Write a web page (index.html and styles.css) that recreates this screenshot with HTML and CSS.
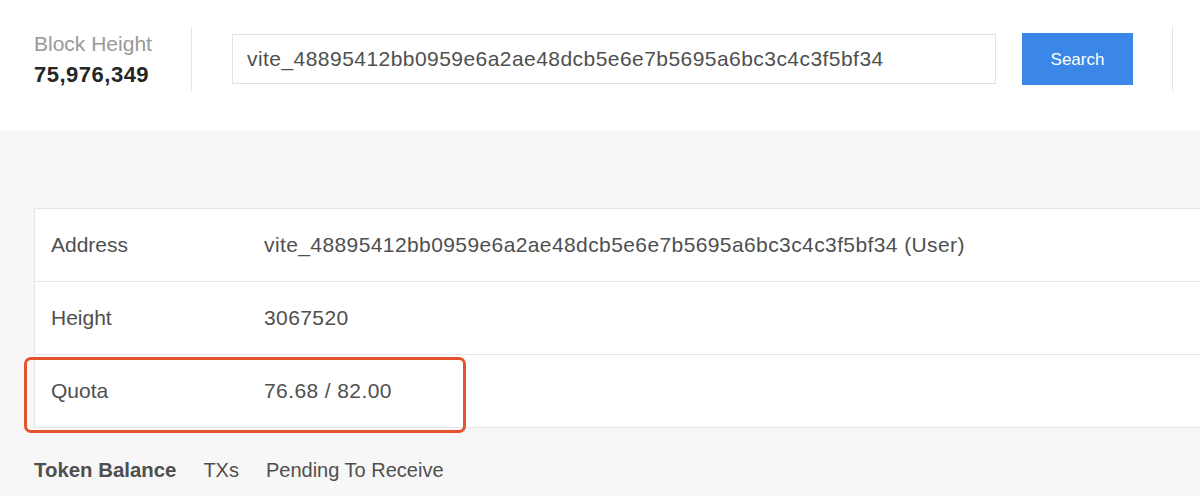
FILE: index.html
```html
<!DOCTYPE html>
<html>
<head>
<meta charset="utf-8">
<link rel="stylesheet" href="styles.css">
</head>
<body>
<header class="top">
  <div class="block-info">
    <div class="bh-label">Block Height</div>
    <div class="bh-value">75,976,349</div>
  </div>
  <div class="vdiv"></div>
  <input class="search-input" type="text" value="vite_48895412bb0959e6a2ae48dcb5e6e7b5695a6bc3c4c3f5bf34">
  <button class="search-btn">Search</button>
  <div class="vdiv vdiv2"></div>
</header>
<main class="content">
  <div class="table">
    <div class="row"><div class="label">Address</div><div class="value">vite_48895412bb0959e6a2ae48dcb5e6e7b5695a6bc3c4c3f5bf34 (User)</div></div>
    <div class="row"><div class="label">Height</div><div class="value">3067520</div></div>
    <div class="row"><div class="label">Quota</div><div class="value">76.68 / 82.00</div></div>
  </div>
  <div class="highlight"></div>
  <nav class="tabs">
    <span class="tab active">Token Balance</span>
    <span class="tab">TXs</span>
    <span class="tab">Pending To Receive</span>
  </nav>
</main>
</body>
</html>
```
FILE: styles.css
```css
html, body {
  margin: 0;
  padding: 0;
  height: 100%;
  overflow: hidden;
  background: #f7f7f7;
  font-family: "Liberation Sans", Arial, Helvetica, sans-serif;
}

.top {
  height: 130px;
  box-sizing: border-box;
  background: #fff;
  display: flex;
  align-items: flex-start;
  padding: 27px 0 0 34px;
}

.block-info {
  width: 157px;
  margin-top: 5px;
}

.bh-label {
  font-size: 21px;
  line-height: 24px;
  color: #999;
}

.bh-value {
  margin-top: 7px;
  font-size: 22px;
  line-height: 24px;
  font-weight: bold;
  color: #262626;
  letter-spacing: 0.5px;
}

.vdiv {
  width: 1px;
  height: 64px;
  background: #e6e6e6;
}

.vdiv2 {
  margin-left: 39px;
  margin-top: -1px;
  height: 66px;
}

.search-input {
  margin: 7px 0 0 40px;
  width: 764px;
  height: 50px;
  box-sizing: border-box;
  border: 1px solid #e2e2e2;
  padding: 0 0 0 14px;
  font-family: "Liberation Sans", Arial, Helvetica, sans-serif;
  font-size: 21px;
  letter-spacing: 0.45px;
  color: #4f4f4f;
  background: #fff;
  outline: none;
}

.search-btn {
  margin: 6px 0 0 26px;
  width: 111px;
  height: 52px;
  border: none;
  background: #3b87e8;
  color: #fff;
  font-family: "Liberation Sans", Arial, Helvetica, sans-serif;
  font-size: 17px;
  padding: 1px 0 0;
}

.content {
  position: relative;
  padding: 78px 0 0 34px;
}

.table {
  width: 1200px;
  background: #fff;
  border-top: 1px solid #e6e6e6;
  border-left: 1px solid #e6e6e6;
}

.row {
  display: flex;
  align-items: center;
  height: 72px;
  border-bottom: 1px solid #e6e6e6;
  padding-left: 16px;
  font-size: 21px;
  color: #4f4f4f;
}

.label {
  width: 213px;
}

.value {
  letter-spacing: 0.4px;
}

.highlight {
  position: absolute;
  left: 24px;
  top: 227px;
  width: 442px;
  height: 76px;
  box-sizing: border-box;
  border: 3px solid #e4532d;
  border-radius: 7px;
}

.tabs {
  display: flex;
  margin-top: 30px;
  font-size: 20px;
  line-height: 24px;
  color: #4f4f4f;
}

.tab {
  margin-right: 27px;
}

.tab.active {
  font-weight: bold;
  font-size: 20.4px;
}
```
